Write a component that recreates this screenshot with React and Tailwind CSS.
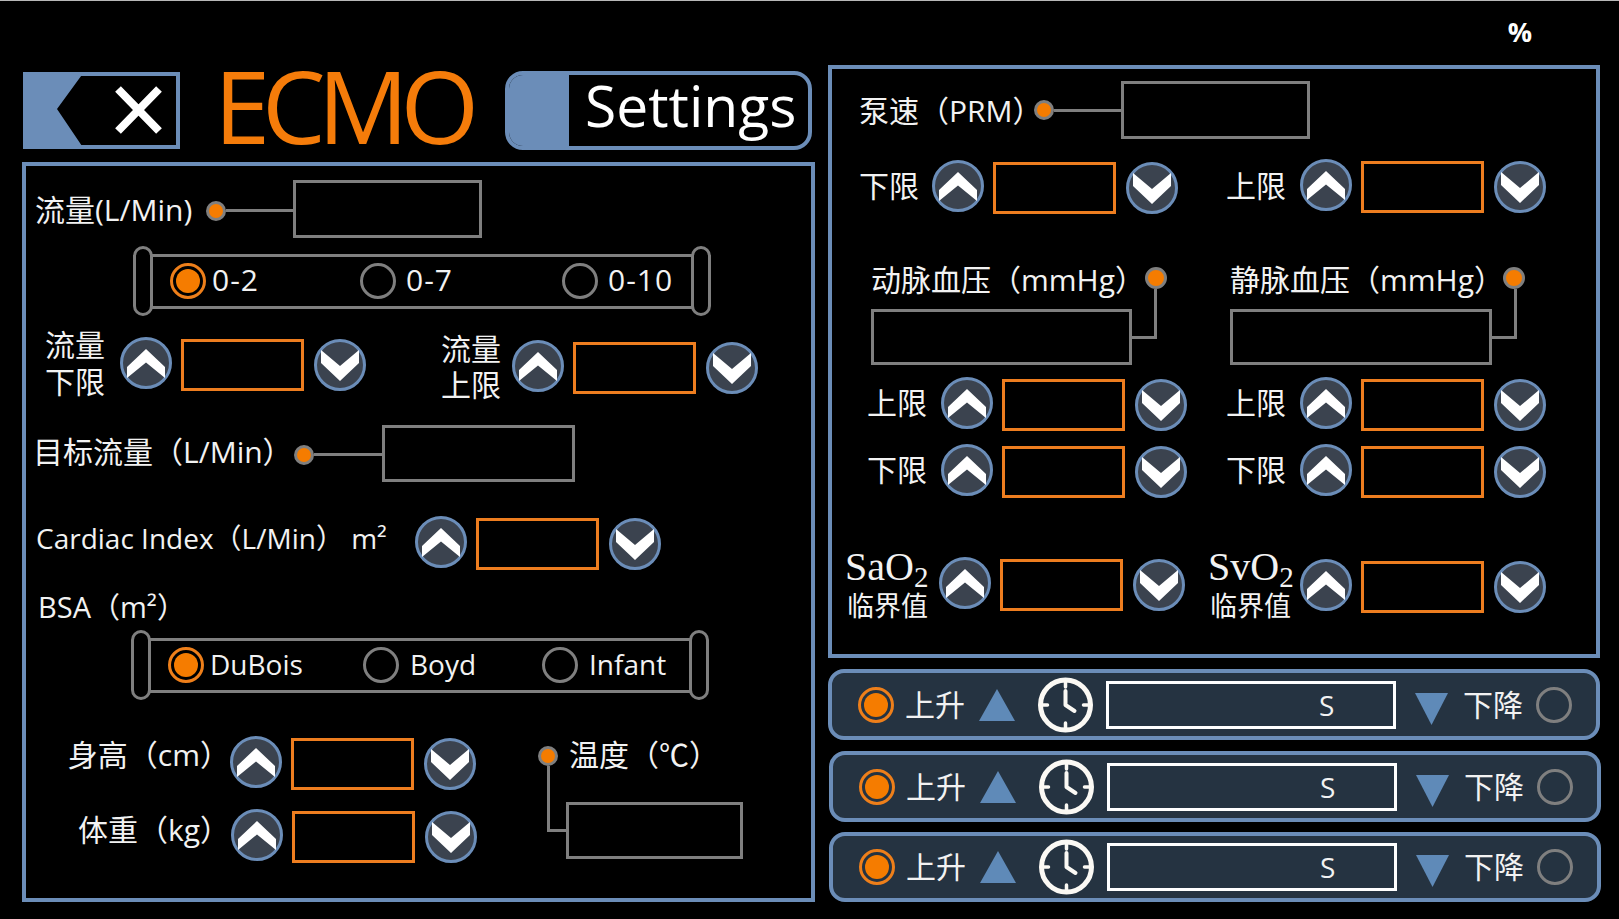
import React from 'react';

const FONT = { fontFamily: '"Open Sans", "Noto Sans CJK SC", sans-serif' };

const Stepper = ({ className = '' }) => (
  <div className={`flex items-start shrink-0 ${className}`}>
    <RoundButton />
    <div className="w-[123px] h-[52px] mt-[2px] ml-[9px] border-[3px] border-[#ed7d1f] shrink-0" />
    <RoundButton down className="mt-[2px] ml-[10px]" />
  </div>
);

const RoundButton = ({ down, className = '' }) => (
  <svg viewBox="0 0 52 52" className={`w-[52px] h-[52px] shrink-0 ${className}`}>
    <circle cx="26" cy="26" r="24.5" fill="#3b434f" stroke="#6b8db8" strokeWidth="3" />
    <polygon
      fill="#fff"
      points={down ? '26,42 45,24 45,11 26,27 7,11 7,24' : '26,12 45,30 45,41 26,25.5 7,41 7,30'}
    />
  </svg>
);

const Dot = ({ className = 'w-[20px] h-[20px]' }) => (
  <div className={`rounded-full bg-[#f57c00] border-[3px] border-[#7f7f7f] shrink-0 ${className}`} />
);

const Readout = ({ className = '' }) => (
  <div className={`border-[3px] border-[#7f7f7f] shrink-0 ${className}`} />
);

const Radio = ({ on }) =>
  on ? (
    <div className="w-[36px] h-[36px] rounded-full border-[3px] border-[#ee7f1a] flex items-center justify-center shrink-0">
      <div className="w-[24px] h-[24px] rounded-full bg-[#f57c00]" />
    </div>
  ) : (
    <div className="w-[36px] h-[36px] rounded-full border-[3px] border-[#7f7f7f] shrink-0" />
  );

const RangeBar = ({ options, textSize, className = '' }) => (
  <div className={`flex items-center w-[578px] h-[70px] ${className}`}>
    <div className="w-[20px] h-[70px] rounded-full border-[3px] border-[#7f7f7f] shrink-0" />
    <div className="flex-1 h-[55px] -mx-[3px] border-y-[3px] border-[#7f7f7f] flex items-center pl-[20px]">
      {options.map((opt) => (
        <div key={opt.label} className={`flex items-center shrink-0 ${opt.cls}`}>
          <Radio on={opt.on} />
          <span className={`leading-none text-[#f2f2f2] -mt-[3px] ${textSize}`}>{opt.label}</span>
        </div>
      ))}
    </div>
    <div className="w-[20px] h-[70px] rounded-full border-[3px] border-[#7f7f7f] shrink-0" />
  </div>
);

const Label = ({ children, className = 'text-[30px]' }) => (
  <div className={`text-[#f2f2f2] whitespace-nowrap shrink-0 ${className}`}>{children}</div>
);

const Clock = () => (
  <svg viewBox="0 0 55 56" className="w-[55px] h-[56px] shrink-0" fill="none" stroke="#fbf9f4" strokeLinecap="round">
    <circle cx="27.5" cy="28" r="25" strokeWidth="5" />
    <path d="M27.5 4v6M27.5 46v6M3.5 28h6M45.5 28h6" strokeWidth="3.5" />
    <path d="M27.5 14v14l9 6" strokeWidth="4" strokeLinejoin="round" />
  </svg>
);

const TimerBar = ({ className = '' }) => (
  <div className={`flex items-center w-[772px] rounded-[16px] border-[4px] border-[#6b8db8] bg-[#253341] pl-[26px] ${className}`}>
    <Radio on />
    <Label className="text-[30px] ml-[11px] w-[59px] leading-none">上升</Label>
    <svg viewBox="0 0 36 32" className="w-[36px] h-[32px] ml-[15px] shrink-0">
      <polygon points="18,0 36,32 0,32" fill="#5f8ab8" />
    </svg>
    <div className="ml-[23px]"><Clock /></div>
    <div className="w-[290px] h-[48px] ml-[13px] border-[3px] border-white flex items-center pl-[210px] shrink-0">
      <span className="text-[28px] leading-none text-[#f2f2f2]">S</span>
    </div>
    <svg viewBox="0 0 33 32" className="w-[33px] h-[32px] ml-[19px] mt-[8px] shrink-0">
      <polygon points="0,0 33,0 16.5,32" fill="#5f8ab8" />
    </svg>
    <Label className="text-[30px] ml-[15px] w-[59px] leading-none">下降</Label>
    <div className="ml-[14px]"><Radio /></div>
  </div>
);

const Gas = ({ name, className = '' }) => (
  <div className={`shrink-0 text-[#f2f2f2] ${className}`}>
    <div className="text-[40px] leading-[44px] h-[44px] whitespace-nowrap" style={{ fontFamily: '"Liberation Serif", serif' }}>
      {name}O<sub className="text-[29px] leading-none -bottom-[7px]">2</sub>
    </div>
    <div className="text-[27px] leading-[34px] ml-[2px] whitespace-nowrap">临界值</div>
  </div>
);

const PressureColumn = ({ title, labelWidth, boxWidth }) => (
  <div className="shrink-0">
    <div className="flex items-center h-[40px]">
      <Label className={`text-[30px] leading-[40px] ${labelWidth}`}>{title}</Label>
      <Dot className="w-[22px] h-[22px] -mt-[4px]" />
    </div>
    <div className="flex items-start">
      <Readout className={`h-[56px] mt-[9px] ${boxWidth}`} />
      <div className="w-[25px] h-[50px] -mt-[11px] border-r-[3px] border-b-[3px] border-[#7f7f7f]" />
    </div>
  </div>
);

const App = () => (
  <div className="w-[1619px] h-[919px] bg-black border-t border-[#b8b8b8] flex overflow-hidden" style={FONT}>
    {/* left column */}
    <div className="w-[793px] ml-[22px] pt-[71px] shrink-0">
      <div className="flex items-start h-[90px]">
        <svg viewBox="0 0 157 77" className="w-[157px] h-[77px] ml-px shrink-0">
          <rect x="2" y="2" width="153" height="73" fill="#000" stroke="#6b8db8" strokeWidth="4" />
          <polygon points="0,0 61,0 34,37 61,77 0,77" fill="#6b8db8" />
          <path d="M95 17l41 42M136 17l-41 42" stroke="#fff" strokeWidth="8" />
        </svg>
        <div className="ml-[34px] w-[291px] -mt-[5px] text-[101px] leading-[77px] font-medium tracking-[-8px] text-[#f57c0a] whitespace-nowrap shrink-0">
          ECMO
        </div>
        <div className="flex w-[307px] h-[79px] -mt-px rounded-[18px] border-[4px] border-[#6b8db8] shrink-0">
          <div className="w-[60px] bg-[#6b8db8] rounded-l-[14px] shrink-0" />
          <div className="flex-1 flex items-center pl-[16px] pb-[10px] text-[57px] font-medium leading-none text-white">Settings</div>
        </div>
      </div>

      <div className="h-[740px] border-[4px] border-[#6b8db8]">
        <div className="flex items-center mt-[14px] pl-[9px]">
          <Label className="text-[30px] w-[171px]">流量(L/Min)</Label>
          <Dot className="w-[20px] h-[20px] mt-[3px]" />
          <div className="w-[67px] h-[3px] mt-[2px] bg-[#7f7f7f]" />
          <Readout className="w-[189px] h-[58px]" />
        </div>

        <RangeBar
          className="mt-[8px] ml-[107px]"
          textSize="text-[30px] tracking-[1px]"
          options={[
            { label: '0-2', on: true, cls: 'w-[190px] gap-[6px]' },
            { label: '0-7', cls: 'w-[202px] gap-[10px]' },
            { label: '0-10', cls: 'gap-[10px]' },
          ]}
        />

        <div className="flex items-start mt-[10px] pl-[19px]">
          <Label className="text-[30px] w-[75px] leading-[37px]">流量<br />下限</Label>
          <Stepper className="mt-[11px]" />
          <Label className="text-[30px] w-[71px] ml-[75px] mt-[5px] leading-[36px]">流量<br />上限</Label>
          <Stepper className="mt-[14px]" />
        </div>

        <div className="flex items-center mt-[22px] pl-[7px]">
          <Label className="text-[30px] w-[261px] -mt-[4px]">目标流量（L/Min）</Label>
          <Dot className="w-[20px] h-[20px] mt-[3px]" />
          <div className="w-[68px] h-[3px] mt-[2px] bg-[#7f7f7f]" />
          <Readout className="w-[193px] h-[57px]" />
        </div>

        <div className="flex items-start mt-[34px] pl-[10px]">
          <Label className="w-[379px] text-[28px] leading-[44px]">Cardiac Index（L/Min） m²</Label>
          <Stepper />
        </div>

        <Label className="mt-[19px] ml-[12px] leading-[36px] text-[29px]">BSA（m²）</Label>

        <RangeBar
          className="mt-[5px] ml-[105px]"
          textSize="text-[28px]"
          options={[
            { label: 'DuBois', on: true, cls: 'w-[195px] gap-[6px]' },
            { label: 'Boyd', cls: 'w-[179px] gap-[11px]' },
            { label: 'Infant', cls: 'gap-[11px]' },
          ]}
        />

        <div className="flex items-start mt-[36px]">
          <div className="shrink-0">
            <div className="flex items-start">
              <Label className="text-[30px] w-[204px] text-right leading-[38px]">身高（cm）</Label>
              <Stepper />
            </div>
            <div className="flex items-start mt-[19px]">
              <Label className="text-[30px] w-[204px] text-right leading-[42px]">体重（kg）</Label>
              <Stepper className="ml-px" />
            </div>
          </div>
          <div className="ml-[61px] shrink-0">
            <div className="flex items-center h-[40px]">
              <Dot />
              <Label className="text-[30px] ml-[11px] -mt-[4px]">温度（℃）</Label>
            </div>
            <div className="flex items-start">
              <div className="w-[19px] h-[66px] ml-[9px] -mt-[10px] border-l-[3px] border-b-[3px] border-[#7f7f7f]" />
              <Readout className="w-[177px] h-[57px] mt-[26px]" />
            </div>
          </div>
        </div>
      </div>
    </div>

    {/* right column */}
    <div className="w-[772px] ml-[13px] shrink-0">
      <div className="h-[64px] flex justify-end pr-[68px] pt-[16px]">
        <span className="text-[27px] leading-[30px] font-bold text-white">%</span>
      </div>

      <div className="h-[593px] border-[4px] border-[#6b8db8]">
        <div className="flex items-center mt-[12px] pl-[27px]">
          <Label className="text-[30px] w-[175px]">泵速（PRM）</Label>
          <Dot />
          <div className="w-[67px] h-[3px] bg-[#7f7f7f]" />
          <Readout className="w-[189px] h-[58px]" />
        </div>

        <div className="flex items-start mt-[21px] pl-[27px]">
          <Label className="text-[30px] w-[73px] leading-[52px]">下限</Label>
          <Stepper />
          <Label className="text-[30px] w-[74px] ml-[48px] leading-[52px]">上限</Label>
          <Stepper className="-mt-px" />
        </div>

        <div className="flex items-start mt-[46px] pl-[39px]">
          <PressureColumn title="动脉血压（mmHg）" labelWidth="w-[274px]" boxWidth="w-[261px]" />
          <div className="ml-[63px]">
            <PressureColumn title="静脉血压（mmHg）" labelWidth="w-[273px]" boxWidth="w-[262px]" />
          </div>
        </div>

        <div className="flex items-start mt-[12px] pl-[35px]">
          <Label className="text-[30px] w-[74px] leading-[52px]">上限</Label>
          <Stepper />
          <Label className="text-[30px] w-[74px] ml-[39px] leading-[52px]">上限</Label>
          <Stepper />
        </div>

        <div className="flex items-start mt-[13px] pl-[35px]">
          <Label className="text-[30px] w-[74px] leading-[52px]">下限</Label>
          <Stepper />
          <Label className="text-[30px] w-[74px] ml-[39px] leading-[52px]">下限</Label>
          <Stepper />
        </div>

        <div className="flex items-start mt-[47px] pl-[13px]">
          <Gas name="Sa" className="w-[94px]" />
          <Stepper className="mt-[12px]" />
          <Gas name="Sv" className="w-[92px] ml-[23px]" />
          <Stepper className="mt-[14px]" />
        </div>
      </div>

      <TimerBar className="h-[71px] mt-[11px]" />
      <TimerBar className="h-[71px] mt-[11px] ml-px" />
      <TimerBar className="h-[70px] mt-[10px] ml-px" />
    </div>
  </div>
);

export default App;
